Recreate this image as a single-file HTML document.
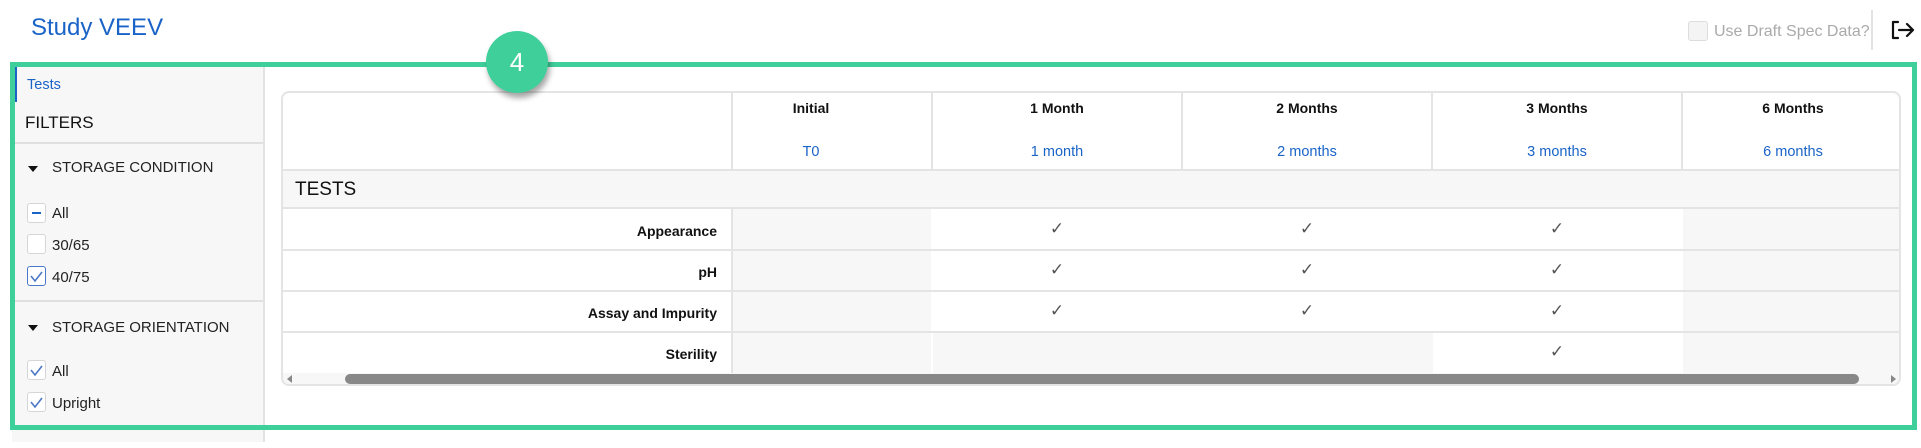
<!DOCTYPE html>
<html><head><style>
*{box-sizing:border-box;margin:0;padding:0}
body{width:1921px;height:448px;background:#fff;font-family:"Liberation Sans",Arial,sans-serif;position:relative;overflow:hidden;color:#222}
.a{position:absolute}
.side{left:12px;top:64px;width:253px;height:378px;background:#f7f7f7;border-right:2px solid #e3e3e3}
.hr{height:2px;background:#e0e0e0;left:12px;width:251px}
.cb{width:19px;height:20px;border:1.5px solid #d6d6d6;border-radius:3px;background:#fff}
.cb.on{border-color:#4a78c8}
.lbl{font-size:15px;color:#222}
.tri{width:0;height:0;border-left:5px solid transparent;border-right:5px solid transparent;border-top:6px solid #111}
.card{left:281px;top:91px;width:1620px;height:295px;border:2px solid #e4e4e4;border-radius:8px;background:#fff;overflow:hidden}
.th{font-size:14px;font-weight:bold;text-align:center;color:#111}
.ts{font-size:14.5px;color:#1a63c7;text-align:center}
.g{background:#f7f7f7}
.rl{font-size:14px;font-weight:bold;text-align:right;color:#111}
.ck{font-size:17px;color:#555;text-align:center}
</style></head><body>
<div class="a" style="left:31px;top:14px;font-size:24px;color:#1a63c7">Study VEEV</div>
<div class="a cb" style="left:1688px;top:21px;width:20px;height:20px;background:#f4f4f4;border-color:#ddd"></div>
<div class="a" style="left:1714px;top:23px;font-size:16px;color:#aaa">Use Draft Spec Data?</div>
<div class="a" style="left:1871px;top:10px;width:2px;height:40px;background:#e3e3e3"></div>
<svg class="a" style="left:1890px;top:20px" width="26" height="20" viewBox="0 0 26 20" fill="none" stroke="#111" stroke-width="2.2" stroke-linecap="round" stroke-linejoin="round"><path d="M8 2H3v16h5M9 10h14M17 4l6 6-6 6"/></svg>

<div class="a side"></div>
<div class="a" style="left:15px;top:67px;width:2px;height:35px;background:#1a63c7"></div>
<div class="a" style="left:27px;top:77px;font-size:14.5px;color:#1a63c7">Tests</div>
<div class="a" style="left:25px;top:113px;font-size:17px;color:#111">FILTERS</div>
<div class="a hr" style="top:142px"></div>
<div class="a tri" style="left:28px;top:166px"></div>
<div class="a lbl" style="left:52px;top:159px">STORAGE CONDITION</div>
<div class="a cb" style="left:27px;top:203px"></div><div class="a" style="left:32px;top:212px;width:9px;height:2px;background:#1a63c7"></div>
<div class="a lbl" style="left:52px;top:205px">All</div>
<div class="a cb" style="left:27px;top:234px"></div>
<div class="a lbl" style="left:52px;top:237px">30/65</div>
<div class="a cb on" style="left:27px;top:266px"></div>
<div class="a lbl" style="left:52px;top:269px">40/75</div>
<div class="a hr" style="top:300px"></div>
<div class="a tri" style="left:28px;top:325px"></div>
<div class="a lbl" style="left:52px;top:319px">STORAGE ORIENTATION</div>
<div class="a cb" style="left:27px;top:360px"></div>
<div class="a lbl" style="left:52px;top:363px">All</div>
<div class="a cb" style="left:27px;top:392px"></div>
<div class="a lbl" style="left:52px;top:395px">Upright</div>
<svg class="a" style="left:0;top:0" width="1921" height="448">
<g fill="none" stroke="#4a78c8" stroke-width="1.6"><path d="M31 276l4 5 7-9M31 370l4 5 7-9M31 402l4 5 7-9"/></g></svg>

<div class="a card">
 <div class="a" style="left:448px;top:0;width:2px;height:78px;background:#e4e4e4"></div>
 <div class="a" style="left:648px;top:0;width:2px;height:78px;background:#e4e4e4"></div>
 <div class="a" style="left:898px;top:0;width:2px;height:78px;background:#e4e4e4"></div>
 <div class="a" style="left:1148px;top:0;width:2px;height:78px;background:#e4e4e4"></div>
 <div class="a" style="left:1398px;top:0;width:2px;height:78px;background:#e4e4e4"></div>
 <div class="a th" style="left:450px;top:7px;width:156px">Initial</div>
 <div class="a th" style="left:650px;top:7px;width:248px">1 Month</div>
 <div class="a th" style="left:900px;top:7px;width:248px">2 Months</div>
 <div class="a th" style="left:1150px;top:7px;width:248px">3 Months</div>
 <div class="a th" style="left:1400px;top:7px;width:220px">6 Months</div>
 <div class="a ts" style="left:450px;top:51px;width:156px">T0</div>
 <div class="a ts" style="left:650px;top:51px;width:248px">1 month</div>
 <div class="a ts" style="left:900px;top:51px;width:248px">2 months</div>
 <div class="a ts" style="left:1150px;top:51px;width:248px">3 months</div>
 <div class="a ts" style="left:1400px;top:51px;width:220px">6 months</div>
 <div class="a g" style="left:0;top:76px;width:1620px;height:40px;border-top:2px solid #e4e4e4;border-bottom:2px solid #e4e4e4"></div>
 <div class="a" style="left:12px;top:86px;font-size:19px;color:#111">TESTS</div>
 <div class="a" style="left:0;top:116px;width:1620px;height:164px">
  <div class="a g" style="left:450px;top:0;width:198px;height:164px"></div>
  <div class="a g" style="left:1400px;top:0;width:220px;height:164px"></div>
  <div class="a g" style="left:650px;top:123px;width:500px;height:41px"></div>
  <div class="a" style="left:0;top:40px;width:1620px;height:2px;background:#e4e4e4"></div>
  <div class="a" style="left:0;top:81px;width:1620px;height:2px;background:#e4e4e4"></div>
  <div class="a" style="left:0;top:122px;width:1620px;height:2px;background:#e4e4e4"></div>
  <div class="a" style="left:448px;top:0;width:2px;height:164px;background:#e4e4e4"></div>
  <div class="a rl" style="left:0;top:14px;width:434px">Appearance</div>
  <div class="a rl" style="left:0;top:55px;width:434px">pH</div>
  <div class="a rl" style="left:0;top:96px;width:434px">Assay and Impurity</div>
  <div class="a rl" style="left:0;top:137px;width:434px">Sterility</div>
  <div class="a ck" style="left:650px;top:10px;width:248px">✓</div>
  <div class="a ck" style="left:900px;top:10px;width:248px">✓</div>
  <div class="a ck" style="left:1150px;top:10px;width:248px">✓</div>
  <div class="a ck" style="left:650px;top:51px;width:248px">✓</div>
  <div class="a ck" style="left:900px;top:51px;width:248px">✓</div>
  <div class="a ck" style="left:1150px;top:51px;width:248px">✓</div>
  <div class="a ck" style="left:650px;top:92px;width:248px">✓</div>
  <div class="a ck" style="left:900px;top:92px;width:248px">✓</div>
  <div class="a ck" style="left:1150px;top:92px;width:248px">✓</div>
  <div class="a ck" style="left:1150px;top:133px;width:248px">✓</div>
 </div>
 <div class="a" style="left:0;top:280px;width:1620px;height:13px;background:#f7f7f7"></div>
 <div class="a" style="left:62px;top:281px;width:1514px;height:10px;border-radius:5px;background:#888"></div>
 <div class="a" style="left:4px;top:282px;width:0;height:0;border-top:4px solid transparent;border-bottom:4px solid transparent;border-right:5px solid #888"></div>
 <div class="a" style="left:1608px;top:282px;width:0;height:0;border-top:4px solid transparent;border-bottom:4px solid transparent;border-left:5px solid #888"></div>
</div>

<div class="a" style="left:10px;top:62px;width:1907px;height:368px;border:5px solid #3ecf9a"></div>
<div class="a" style="left:486px;top:31px;width:62px;height:62px;border-radius:50%;background:#3ecf9a;box-shadow:2px 5px 6px rgba(0,0,0,.35);color:#fff;font-size:26px;text-align:center;line-height:62px">4</div>
</body></html>
